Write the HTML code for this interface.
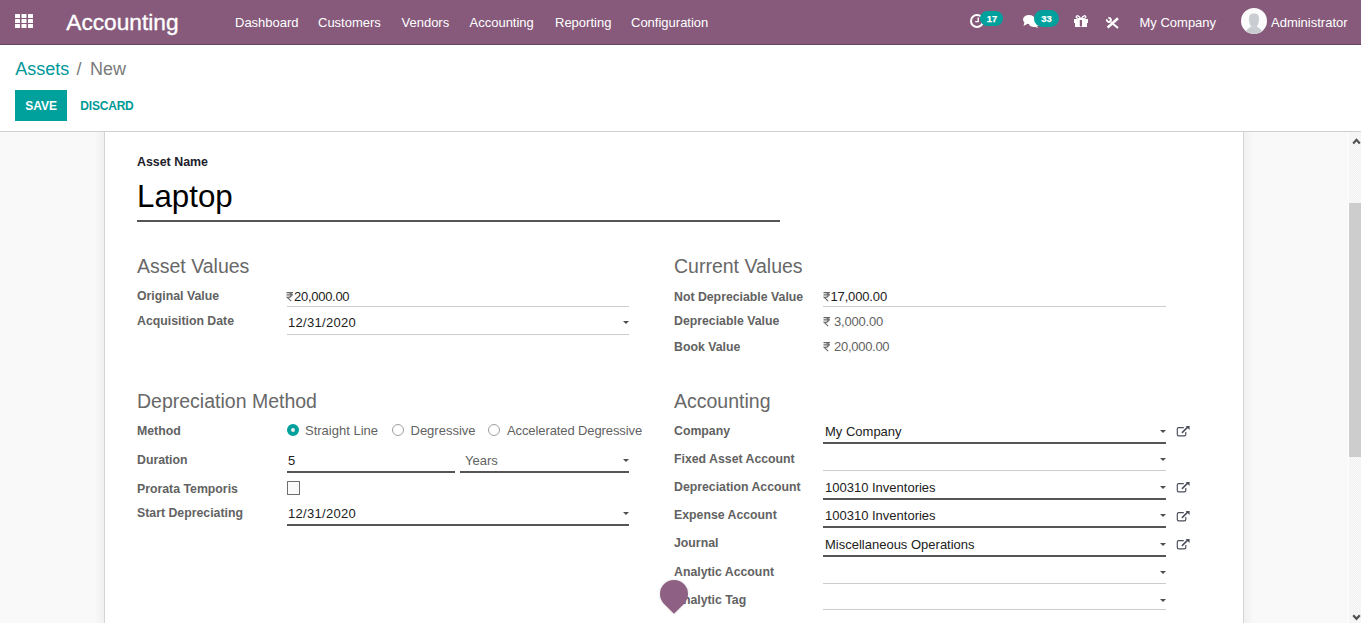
<!DOCTYPE html>
<html><head><meta charset="utf-8">
<style>
*{box-sizing:border-box;margin:0;padding:0}
html,body{width:1361px;height:623px;overflow:hidden;background:#fff;font-family:"Liberation Sans",sans-serif;}
.a{position:absolute;white-space:nowrap;line-height:1}
#nav{position:absolute;left:0;top:0;width:1361px;height:44px;background:#875A7B}
#navb{position:absolute;left:0;top:44px;width:1361px;height:1px;background:#654460}
.nm{font-size:13px;color:#fff}
.brand{font-size:22.7px;color:#fff;-webkit-text-stroke:0.35px #fff}
.badge{position:absolute;background:#00A09D;color:#fff;font-weight:bold;font-size:9.4px;text-align:center;border-radius:9px;-webkit-text-stroke:0.25px #fff}
#cp{position:absolute;left:0;top:131px;width:1361px;height:1px;background:#cfcfcf}
#bg{position:absolute;left:0;top:132px;width:1349px;height:491px;background:#f9f9f9}
#sheet{position:absolute;left:104px;top:132px;width:1140px;height:491px;background:#fff;border-left:1px solid #d2d4d8;border-right:1px solid #d2d4d8}
.shl{position:absolute;top:132px;width:10px;height:491px}
.lbl{font-size:12.3px;font-weight:bold;color:#626262}
.hdr{font-size:19.5px;color:#686868}
.val{font-size:13px;color:#212121}
.ro{font-size:13px;color:#626262}
.ul1{position:absolute;height:1px;background:#cccccc}
.ul2{position:absolute;height:2px;background:#555}
.car{position:absolute;width:0;height:0;border-left:3px solid transparent;border-right:3px solid transparent;border-top:3px solid #4e4e4e}
.ext{position:absolute}
#sb{position:absolute;left:1348px;top:132px;width:13px;height:491px;background:#fff}
#sbt{position:absolute;left:1349px;top:132px;width:12px;height:491px;background-color:#f0f0f0;background-image:linear-gradient(45deg,#fafafa 25%,transparent 25%,transparent 75%,#fafafa 75%),linear-gradient(45deg,#fafafa 25%,transparent 25%,transparent 75%,#fafafa 75%);background-size:2px 2px;background-position:0 0,1px 1px}
#thumb{position:absolute;left:1349px;top:203px;width:12px;height:254px;background:#cdcdcd}
</style></head><body>
<div id="nav"></div><div id="navb"></div>
<!-- apps grid -->
<svg class="a" style="left:0;top:0" width="60" height="44">
<g fill="#fff">
<rect x="15" y="14" width="5" height="4" rx=".5"/><rect x="21.5" y="14" width="5" height="4" rx=".5"/><rect x="28" y="14" width="5" height="4" rx=".5"/>
<rect x="15" y="19" width="5" height="4" rx=".5"/><rect x="21.5" y="19" width="5" height="4" rx=".5"/><rect x="28" y="19" width="5" height="4" rx=".5"/>
<rect x="15" y="24" width="5" height="4" rx=".5"/><rect x="21.5" y="24" width="5" height="4" rx=".5"/><rect x="28" y="24" width="5" height="4" rx=".5"/>
</g></svg>
<div class="a brand" style="left:66.3px;top:10.9px">Accounting</div>
<div class="a nm" style="left:235px;top:15.8px">Dashboard</div>
<div class="a nm" style="left:318px;top:15.8px">Customers</div>
<div class="a nm" style="left:401.5px;top:15.8px">Vendors</div>
<div class="a nm" style="left:469.5px;top:15.8px">Accounting</div>
<div class="a nm" style="left:555px;top:15.8px">Reporting</div>
<div class="a nm" style="left:631px;top:15.8px">Configuration</div>
<!-- clock -->
<svg class="a" style="left:960px;top:0" width="30" height="44">
<circle cx="17" cy="21" r="6" fill="none" stroke="#fff" stroke-width="2"/>
<path d="M18.2 17.6 V21.6 H15.2" fill="none" stroke="#fff" stroke-width="1.4"/>
</svg>
<div class="badge" style="left:980px;top:11px;width:23px;height:15px;line-height:16px;border-radius:7.5px;padding-left:1px">17</div>
<!-- chat -->
<svg class="a" style="left:1015px;top:0" width="30" height="44">
<g fill="#fff">
<ellipse cx="14" cy="19.5" rx="6" ry="4.5"/>
<path d="M9.5 22 L8.5 26 L13 23.5 Z"/>
<ellipse cx="19" cy="24" rx="5" ry="3"/>
<path d="M21 25.5 L23.5 28 L18.5 26.5 Z"/>
</g></svg>
<div class="badge" style="left:1034px;top:10px;width:25px;height:17px;line-height:17px;border-radius:8.5px">33</div>
<!-- gift -->
<svg class="a" style="left:1065px;top:0" width="30" height="44">
<g fill="#fff">
<rect x="9" y="19" width="14" height="4"/>
<rect x="10" y="23" width="12" height="4"/>
</g>
<g fill="none" stroke="#fff" stroke-width="1.3">
<path d="M15.6 18.6 C14 15.4 11.2 15 11.2 17 C11.2 18.4 13.5 18.6 15.6 18.6 Z"/>
<path d="M16.4 18.6 C18 15.4 20.8 15 20.8 17 C20.8 18.4 18.5 18.6 16.4 18.6 Z"/>
</g>
<rect x="14.8" y="20" width="2.2" height="6.5" fill="#875A7B"/>
</svg>
<!-- tools -->
<svg class="a" style="left:1100px;top:10px" width="24" height="24">
<path d="M7.6 17.6 L18 8.3" fill="none" stroke="#fff" stroke-width="2.6"/>
<path d="M11 12.3 L18 18" fill="none" stroke="#fff" stroke-width="2.1"/>
<path d="M8.38 7.97 A2 2 0 1 1 6.97 9.38" fill="none" stroke="#fff" stroke-width="2"/>
</svg>
<div class="a nm" style="left:1139.5px;top:16.2px">My Company</div>
<svg class="a" style="left:1241px;top:7.8px" width="26" height="26">
<defs><clipPath id="cc"><circle cx="13" cy="13" r="13"/></clipPath></defs>
<circle cx="13" cy="13" r="13" fill="#fbfbfb"/>
<g clip-path="url(#cc)" fill="#c9ccd0">
<path d="M8 11 C8 6.5 10 5.4 13 5.4 C16 5.4 18 6.5 18 11 C18 14.5 16.8 17 15.8 18.8 L10.2 18.8 C9.2 17 8 14.5 8 11 Z"/>
<path d="M3 27 C5 21.5 8 20 10.5 18.6 L15.5 18.6 C18 20 21 21.5 23 27 Z"/>
</g></svg>
<div class="a nm" style="left:1271px;top:16px">Administrator</div>

<!-- control panel -->
<div class="a" style="left:15.3px;top:60.2px;font-size:18px;color:#00989a">Assets</div>
<div class="a" style="left:76.5px;top:60.2px;font-size:18px;color:#7a7a7a">/</div>
<div class="a" style="left:90px;top:60.2px;font-size:18px;color:#7a7a7a">New</div>
<div class="a" style="left:15px;top:90px;width:52px;height:31px;background:#00A09D"></div>
<div class="a" style="left:25.2px;top:99.8px;font-size:12px;font-weight:bold;color:#fff">SAVE</div>
<div class="a" style="left:80.3px;top:99.8px;font-size:12px;font-weight:bold;color:#009a98;letter-spacing:-0.2px">DISCARD</div>
<div id="cp"></div>
<div id="bg"></div>
<div id="sheet"></div><div class="shl" style="left:94px;background:linear-gradient(to right,rgba(0,0,0,0),rgba(0,0,0,.035))"></div><div class="shl" style="left:1244px;background:linear-gradient(to left,rgba(0,0,0,0),rgba(0,0,0,.035))"></div>
<div id="sb"></div><div id="sbt"></div><div id="thumb"></div>
<svg class="a" style="left:1349px;top:132px" width="12" height="491">
<path d="M4.2 11.4 L7.5 7.8 L10.8 11.4" fill="none" stroke="#505050" stroke-width="2.2"/>
<path d="M4.2 483.2 L7.5 486.8 L10.8 483.2" fill="none" stroke="#505050" stroke-width="2.2"/>
</svg>

<!-- form -->
<div class="a" style="left:137px;top:155.6px;font-size:12.4px;font-weight:bold;color:#1d1d2b">Asset Name</div>
<div class="a" style="left:137px;top:180.6px;font-size:31.3px;color:#000">Laptop</div>
<div class="ul2" style="left:137px;top:220px;width:643px;background:#555"></div>

<div class="a hdr" style="left:137px;top:257.3px">Asset Values</div>
<div class="a hdr" style="left:674px;top:257.3px">Current Values</div>
<div class="a lbl" style="left:137px;top:290.3px">Original Value</div>
<div class="a lbl" style="left:137px;top:315.4px">Acquisition Date</div>
<svg class="a" style="left:286px;top:291.6px" width="8" height="10"><path d="M0.5 0.6 H7 M0.5 2.9 H7 M1 0.6 H2.6 C4.6 0.6 5.4 1.6 5.4 2.9 C5.4 4.3 4.3 5.2 2.3 5.2 H1 L5.2 9.2" fill="none" stroke="#666" stroke-width="1.1"/></svg>
<div class="a val" style="left:294px;top:289.7px;letter-spacing:-0.28px">20,000.00</div>
<div class="ul1" style="left:287px;top:306px;width:342px"></div>
<div class="a val" style="left:288px;top:316.0px;letter-spacing:0.3px">12/31/2020</div>
<div class="ul1" style="left:287px;top:334px;width:342px"></div>
<div class="car" style="left:623px;top:321px"></div>
<div class="a lbl" style="left:674px;top:290.5px">Not Depreciable Value</div>
<div class="a lbl" style="left:674px;top:315.4px">Depreciable Value</div>
<div class="a lbl" style="left:674px;top:340.6px">Book Value</div>
<svg class="a" style="left:823px;top:291.6px" width="8" height="10"><path d="M0.5 0.6 H7 M0.5 2.9 H7 M1 0.6 H2.6 C4.6 0.6 5.4 1.6 5.4 2.9 C5.4 4.3 4.3 5.2 2.3 5.2 H1 L5.2 9.2" fill="none" stroke="#666" stroke-width="1.1"/></svg>
<div class="a val" style="left:830.5px;top:289.6px;letter-spacing:-0.15px">17,000.00</div>
<div class="ul1" style="left:823px;top:306px;width:343px"></div>
<svg class="a" style="left:823px;top:316.6px" width="8" height="10"><path d="M0.5 0.6 H7 M0.5 2.9 H7 M1 0.6 H2.6 C4.6 0.6 5.4 1.6 5.4 2.9 C5.4 4.3 4.3 5.2 2.3 5.2 H1 L5.2 9.2" fill="none" stroke="#666" stroke-width="1.1"/></svg>
<div class="a ro" style="left:834px;top:314.7px;letter-spacing:-0.2px">3,000.00</div>
<svg class="a" style="left:823px;top:341.6px" width="8" height="10"><path d="M0.5 0.6 H7 M0.5 2.9 H7 M1 0.6 H2.6 C4.6 0.6 5.4 1.6 5.4 2.9 C5.4 4.3 4.3 5.2 2.3 5.2 H1 L5.2 9.2" fill="none" stroke="#666" stroke-width="1.1"/></svg>
<div class="a ro" style="left:834px;top:339.7px;letter-spacing:-0.28px">20,000.00</div>
<div class="a hdr" style="left:137px;top:391.8px">Depreciation Method</div>
<div class="a lbl" style="left:137px;top:424.6px">Method</div>
<svg class="a" style="left:284px;top:421px" width="230" height="18"><circle cx="9" cy="9" r="4" fill="#ececec" stroke="#00A09D" stroke-width="4"/><circle cx="114" cy="9" r="5.5" fill="#fff" stroke="#a0a0a0" stroke-width="1"/><circle cx="210" cy="9" r="5.5" fill="#fff" stroke="#a0a0a0" stroke-width="1"/></svg>
<div class="a ro" style="left:305px;top:423.8px">Straight Line</div>
<div class="a ro" style="left:410.5px;top:423.8px">Degressive</div>
<div class="a ro" style="left:507px;top:423.8px;letter-spacing:-0.1px">Accelerated Degressive</div>
<div class="a lbl" style="left:137px;top:453.8px">Duration</div>
<div class="a val" style="left:288px;top:454.0px">5</div>
<div class="ul2" style="left:287px;top:471px;width:168px"></div>
<div class="a ro" style="left:465px;top:454.0px">Years</div>
<div class="ul2" style="left:460px;top:471px;width:169px"></div>
<div class="car" style="left:623px;top:459px"></div>
<div class="a lbl" style="left:137px;top:482.9px">Prorata Temporis</div>
<div class="a" style="left:287px;top:481px;width:13px;height:14px;border:1.7px solid #6e6e6e;background:#fafafa;border-radius:0.5px"></div>
<div class="a lbl" style="left:137px;top:506.9px">Start Depreciating</div>
<div class="a val" style="left:288px;top:506.6px;letter-spacing:0.3px">12/31/2020</div>
<div class="ul2" style="left:287px;top:524px;width:342px"></div>
<div class="car" style="left:623px;top:512px"></div>
<div class="a hdr" style="left:674px;top:391.8px">Accounting</div>
<div class="a lbl" style="left:674px;top:424.6px">Company</div>
<div class="a val" style="left:825px;top:425.2px">My Company</div>
<div class="ul2" style="left:823px;top:442px;width:343px"></div>
<div class="car" style="left:1160px;top:430px"></div>
<svg class="a" style="left:1172px;top:422.0px" width="22" height="18"><path d="M11.8 5.6 H6.7 Q5.3 5.6 5.3 7 V12.5 Q5.3 13.9 6.7 13.9 H12.4 Q13.8 13.9 13.8 12.5 V10" fill="none" stroke="#4b4f5a" stroke-width="1.15"/><path d="M9.9 10.9 L15.9 4.9" stroke="#4b4f5a" stroke-width="1.5"/><path d="M13.6 4 H17.6 V8 Z" fill="#4b4f5a"/></svg>
<div class="a lbl" style="left:674px;top:452.6px">Fixed Asset Account</div>
<div class="ul1" style="left:823px;top:470px;width:343px"></div>
<div class="car" style="left:1160px;top:458.4px"></div>
<div class="a lbl" style="left:674px;top:480.6px">Depreciation Account</div>
<div class="a val" style="left:825px;top:481.2px">100310 Inventories</div>
<div class="ul2" style="left:823px;top:498px;width:343px"></div>
<div class="car" style="left:1160px;top:486px"></div>
<svg class="a" style="left:1172px;top:478.0px" width="22" height="18"><path d="M11.8 5.6 H6.7 Q5.3 5.6 5.3 7 V12.5 Q5.3 13.9 6.7 13.9 H12.4 Q13.8 13.9 13.8 12.5 V10" fill="none" stroke="#4b4f5a" stroke-width="1.15"/><path d="M9.9 10.9 L15.9 4.9" stroke="#4b4f5a" stroke-width="1.5"/><path d="M13.6 4 H17.6 V8 Z" fill="#4b4f5a"/></svg>
<div class="a lbl" style="left:674px;top:508.5px">Expense Account</div>
<div class="a val" style="left:825px;top:509.1px">100310 Inventories</div>
<div class="ul2" style="left:823px;top:526px;width:343px"></div>
<div class="car" style="left:1160px;top:514px"></div>
<svg class="a" style="left:1172px;top:506.5px" width="22" height="18"><path d="M11.8 5.6 H6.7 Q5.3 5.6 5.3 7 V12.5 Q5.3 13.9 6.7 13.9 H12.4 Q13.8 13.9 13.8 12.5 V10" fill="none" stroke="#4b4f5a" stroke-width="1.15"/><path d="M9.9 10.9 L15.9 4.9" stroke="#4b4f5a" stroke-width="1.5"/><path d="M13.6 4 H17.6 V8 Z" fill="#4b4f5a"/></svg>
<div class="a lbl" style="left:674px;top:537.4px">Journal</div>
<div class="a val" style="left:825px;top:538.0px">Miscellaneous Operations</div>
<div class="ul2" style="left:823px;top:555px;width:343px"></div>
<div class="car" style="left:1160px;top:543px"></div>
<svg class="a" style="left:1172px;top:534.9px" width="22" height="18"><path d="M11.8 5.6 H6.7 Q5.3 5.6 5.3 7 V12.5 Q5.3 13.9 6.7 13.9 H12.4 Q13.8 13.9 13.8 12.5 V10" fill="none" stroke="#4b4f5a" stroke-width="1.15"/><path d="M9.9 10.9 L15.9 4.9" stroke="#4b4f5a" stroke-width="1.5"/><path d="M13.6 4 H17.6 V8 Z" fill="#4b4f5a"/></svg>
<div class="a lbl" style="left:674px;top:565.6px">Analytic Account</div>
<div class="ul1" style="left:823px;top:583px;width:343px"></div>
<div class="car" style="left:1160px;top:571px"></div>
<div class="a lbl" style="left:674px;top:593.8px">Analytic Tag</div>
<div class="ul1" style="left:823px;top:609px;width:343px"></div>
<div class="car" style="left:1160px;top:599px"></div>
<div class="a" style="left:660px;top:580px;width:28px;height:28px;background:#8e6084;border-radius:50% 50% 0 50%;transform:rotate(45deg);transform-origin:14px 14px;box-shadow:0 0 3px rgba(0,0,0,.15)"></div>
</body></html>
